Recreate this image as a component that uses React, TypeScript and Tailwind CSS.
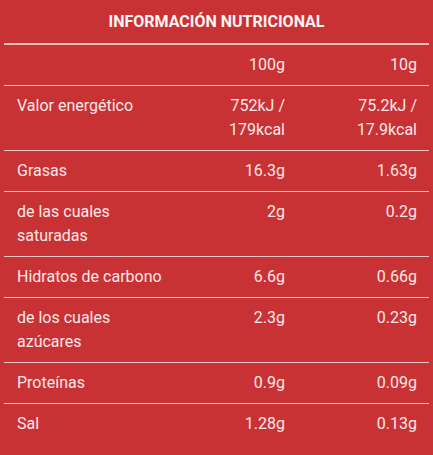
import React from "react";

type Row = { label: React.ReactNode; a: React.ReactNode; b: React.ReactNode };

const rows: Row[] = [
  { label: "", a: "100g", b: "10g" },
  {
    label: "Valor energético",
    a: (
      <>
        752kJ /<br />
        179kcal
      </>
    ),
    b: (
      <>
        75.2kJ /<br />
        17.9kcal
      </>
    ),
  },
  { label: "Grasas", a: "16.3g", b: "1.63g" },
  {
    label: (
      <>
        de las cuales
        <br />
        saturadas
      </>
    ),
    a: "2g",
    b: "0.2g",
  },
  { label: "Hidratos de carbono", a: "6.6g", b: "0.66g" },
  {
    label: (
      <>
        de los cuales
        <br />
        azúcares
      </>
    ),
    a: "2.3g",
    b: "0.23g",
  },
  { label: "Proteínas", a: "0.9g", b: "0.09g" },
  { label: "Sal", a: "1.28g", b: "0.13g" },
];

export default function App() {
  return (
    <div
      className="w-[433px] h-[455px] bg-[#c93235] text-[#fbe7e7]"
      style={{ fontFamily: "Roboto, 'Liberation Sans', sans-serif" }}
    >
      <div className="mx-1">
        <div className="h-[45px] flex items-center justify-center border-b-2 border-[#f3bcc0]">
          <h2 className="text-[16px] font-bold uppercase text-[#fdf3f3] leading-6">
            Información nutricional
          </h2>
        </div>
        {rows.map((r, i) => (
          <div
            key={i}
            className={`grid grid-cols-[1fr_120px_132px] text-[16px] leading-6 ${
              i < rows.length - 1 ? "border-b border-[#efc6c7]" : ""
            }`}
          >
            <div className="pl-[13px] pr-2 py-2">{r.label}</div>
            <div className="pr-3 py-2 text-right">{r.a}</div>
            <div className="pr-3 py-2 text-right">{r.b}</div>
          </div>
        ))}
      </div>
    </div>
  );
}
